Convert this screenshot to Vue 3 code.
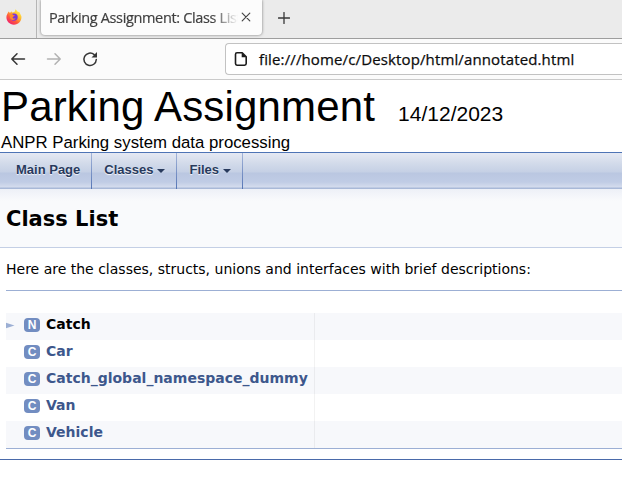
<script setup>
const tabs = [
  { label: 'Main Page', menu: false },
  { label: 'Classes', menu: true },
  { label: 'Files', menu: true },
]
const rows = [
  { kind: 'N', name: 'Catch', namespace: true },
  { kind: 'C', name: 'Car' },
  { kind: 'C', name: 'Catch_global_namespace_dummy' },
  { kind: 'C', name: 'Van' },
  { kind: 'C', name: 'Vehicle' },
]
</script>

<template>
  <div class="window">
    <div class="tabstrip">
      <div class="pinned">
        <svg width="16" height="16" viewBox="0 0 16 16">
          <defs>
            <linearGradient id="flame" x1="0.85" y1="0.1" x2="0.2" y2="0.95">
              <stop offset="0" stop-color="#fff04a" />
              <stop offset="0.35" stop-color="#ffb52c" />
              <stop offset="0.65" stop-color="#ff5a3c" />
              <stop offset="1" stop-color="#ef1f6e" />
            </linearGradient>
          </defs>
          <path d="M2.6 2.4 4 4.1 5.4 2.2 6 3.5 8.5 3 9.6.3 12 3 13.2 2.8 15.4 7.2C16 12 12.4 15.7 8 15.7 3.6 15.7.3 12.3.4 8.1.5 5.5 1.7 4.4 2.6 2.4Z" fill="url(#flame)" />
          <circle cx="8" cy="8.1" r="3.7" fill="#7a35d8" />
          <path d="M3.6 5.2C5 4.4 6.4 4.9 7.2 6L9 6.5C8.5 7.5 7.2 7.2 6.6 8.4 6.9 9.6 8.3 9.9 9.6 9.3 8.8 11.4 5.6 11.6 4.2 9.4Z" fill="#ff8a2b" />
        </svg>
      </div>
      <div class="tab">
        <span class="tab-title">Parking Assignment: Class List</span>
        <svg class="close" width="10" height="10" viewBox="0 0 10 10"><path d="M1.2 1.2 8.8 8.8M8.8 1.2 1.2 8.8" /></svg>
      </div>
      <svg class="plus" width="12" height="12" viewBox="0 0 12 12"><path d="M6 .5V11.5M.5 6H11.5" /></svg>
    </div>
    <div class="toolbar">
      <svg class="nav-icon" width="16" height="16" viewBox="0 0 16 16"><path d="M14.5 8H2M7 2.8 1.8 8 7 13.2" /></svg>
      <svg class="nav-icon dim" width="16" height="16" viewBox="0 0 16 16"><path d="M1.5 8H14M9 2.8 14.2 8 9 13.2" /></svg>
      <svg class="nav-icon" width="16" height="16" viewBox="0 0 16 16">
        <path d="M14.3 8.5A6.2 6.2 0 1 1 12.2 3.6" />
        <path class="solid" d="M15 1V6.5H9.5Z" />
      </svg>
      <div class="address">
        <svg width="14" height="16" viewBox="0 0 14 16">
          <path class="page" d="M3 1.8H8.2L12.2 5.8V12.6Q12.2 14.2 10.6 14.2H3Q1.5 14.2 1.5 12.6V3.4Q1.5 1.8 3 1.8Z" />
          <path class="fold" d="M7.7 1.5V6.2H12.5Z" />
        </svg>
        <span class="url">file:///home/c/Desktop/html/annotated.html</span>
      </div>
    </div>

    <header class="project">
      <div class="project-line">
        <span class="project-name">Parking Assignment</span>
        <span class="project-number">14/12/2023</span>
      </div>
      <div class="brief">ANPR Parking system data processing</div>
    </header>
    <nav class="menu">
      <a v-for="tab in tabs" :key="tab.label" class="menu-item">
        {{ tab.label }}<i v-if="tab.menu" class="caret"></i>
      </a>
    </nav>
    <div class="heading"><h1>Class List</h1></div>
    <main class="contents">
      <p>Here are the classes, structs, unions and interfaces with brief descriptions:</p>
      <div class="directory">
        <div v-for="row in rows" :key="row.name" class="row">
          <div class="entry">
            <span class="arrow"><svg v-if="row.namespace" width="9" height="7" viewBox="0 0 9 7"><path d="M0 .7 8.5 3.5 0 6.3Z" /></svg></span>
            <span class="badge">{{ row.kind }}</span>
            <span class="name" :class="{ plain: row.namespace }">{{ row.name }}</span>
          </div>
          <div class="desc"></div>
        </div>
      </div>
    </main>
    <footer class="footer"></footer>
  </div>
</template>

<style>
body {
  margin: 0;
  background: #fff;
}
</style>

<style scoped>
.window {
  width: 622px;
  height: 490px;
  overflow: hidden;
  font: 14px/22px "DejaVu Sans", sans-serif;
  color: #000;
}
svg {
  display: block;
  flex: none;
}
path {
  stroke-linecap: round;
  stroke-linejoin: round;
}
.tabstrip {
  display: flex;
  box-sizing: border-box;
  height: 39px;
  background: #ebebeb;
  border-bottom: 1px solid #9e9e9e;
}
.pinned {
  box-sizing: border-box;
  width: 37px;
  padding: 9px 0 0 6px;
  border-right: 1px solid #b5b5b5;
}
.tab {
  display: flex;
  box-sizing: border-box;
  width: 221px;
  height: 35px;
  margin-left: 4px;
  padding: 0 0 0 8px;
  background: #fcfcfc;
  border-radius: 0 0 4px 4px;
  box-shadow: 0 0 3px rgba(0, 0, 0, 0.5);
}
.tab-title {
  width: 189px;
  height: 35px;
  overflow: hidden;
  white-space: nowrap;
  font: 14.5px/36px "Open Sans", sans-serif;
  letter-spacing: -0.35px;
  -webkit-text-stroke: 0.2px #3f3f3f;
  color: #3f3f3f;
  -webkit-mask-image: linear-gradient(90deg, #000 163px, transparent 189px);
  mask-image: linear-gradient(90deg, #000 163px, transparent 189px);
}
.close {
  margin: 12px 0 0 3px;
  fill: none;
  stroke: #454545;
  stroke-width: 1.2;
}
.plus {
  margin: 12px 0 0 16px;
  fill: none;
  stroke: #383838;
  stroke-width: 1.3;
}
.toolbar {
  display: flex;
  align-items: center;
  box-sizing: border-box;
  height: 41px;
  padding-left: 10px;
  background: #fbfbfb;
  border-bottom: 1px solid #cacaca;
}
.nav-icon {
  margin-right: 20px;
  fill: none;
  stroke: #353535;
  stroke-width: 1.5;
}
.dim {
  stroke: #b2b2b2;
}
.solid {
  fill: #353535;
  stroke: none;
}
.address {
  display: flex;
  align-items: center;
  box-sizing: border-box;
  flex: 1;
  height: 32px;
  margin-left: 107px;
  padding-left: 8px;
  background: #fff;
  border: 1px solid #c2c2c2;
  border-right: 0;
  border-radius: 4px 0 0 4px;
}
.page {
  fill: none;
  stroke: #1c1c1c;
  stroke-width: 1.6;
}
.fold {
  fill: #1c1c1c;
}
.url {
  margin-left: 11px;
  white-space: nowrap;
  font: 15px/30px "Open Sans", sans-serif;
  letter-spacing: 0.13px;
  -webkit-text-stroke: 0.25px #0c0c0c;
  color: #0c0c0c;
}
.project {
  box-sizing: border-box;
  height: 72px;
  padding-left: 1px;
  font-family: "Liberation Sans", Arial, sans-serif;
  white-space: nowrap;
}
.project-line {
  display: flex;
  align-items: baseline;
  height: 53px;
  line-height: 53px;
}
.project-name {
  font-size: 42px;
  letter-spacing: 0.16px;
}
.project-number {
  margin-left: 23px;
  font-size: 21px;
}
.brief {
  font-size: 16.8px;
  line-height: 19px;
}
.menu {
  display: flex;
  box-sizing: border-box;
  height: 37px;
  border-top: 1px solid #4e74b5;
  background: linear-gradient(#e5e9f3 0, #d3dbea 10px, #c5d0e5 19px, #bac7e1 20px, #c0cce5 29px, #d4dced 34px, #a9b9d8 35px, #a9b9d8 36px);
}
.menu-item {
  display: flex;
  align-items: center;
  height: 36px;
  box-sizing: border-box;
  padding: 0 11px 3px 12px;
  border-right: 1px solid;
  border-image: linear-gradient(#a6b7da, #5373b4) 1;
  font: bold 13px/33px "Liberation Sans", Arial, sans-serif;
  color: #283a5d;
  text-shadow: 0 1px 1px rgba(255, 255, 255, 0.9);
}
.menu-item:first-child {
  padding-left: 16px;
}
.caret {
  margin: 3px 0 0 4px;
  border: 4px solid transparent;
  border-top-color: #283a5d;
  border-bottom: 0;
}
.heading {
  box-sizing: border-box;
  height: 59px;
  padding: 15px 6px 0;
  background: linear-gradient(#edf0f7, #f9fafc 12px);
  border-bottom: 1px solid #c4cfe5;
}
h1 {
  margin: 0;
  font-size: 21px;
  line-height: 30px;
}
.contents {
  padding-left: 6px;
}
p {
  margin: 0;
  height: 42px;
  line-height: 42px;
  white-space: nowrap;
}
.directory {
  padding-top: 22px;
  border-top: 1px solid #9cafd4;
  border-bottom: 1px solid #9cafd4;
}
.row {
  display: flex;
  height: 27px;
}
.row:nth-child(odd) {
  background: #f7f8fb;
}
.entry {
  display: flex;
  box-sizing: border-box;
  width: 308px;
}
.desc {
  flex: 1;
  border-left: 1px solid rgba(0, 0, 0, 0.05);
}
.arrow {
  width: 18px;
  padding-top: 9px;
}
.arrow path {
  fill: #9cafd4;
}
.badge {
  width: 16px;
  height: 14px;
  margin: 5px 6px 0 0;
  border-radius: 4px;
  background: #728dc1;
  color: #fff;
  font: bold 12px/14px "Liberation Sans", Arial, sans-serif;
  text-align: center;
}
.name {
  color: #3d578c;
  font-weight: bold;
}
.plain {
  color: #000;
}
.footer {
  margin-top: 10px;
  border-top: 1px solid #4a6aaa;
}
</style>
